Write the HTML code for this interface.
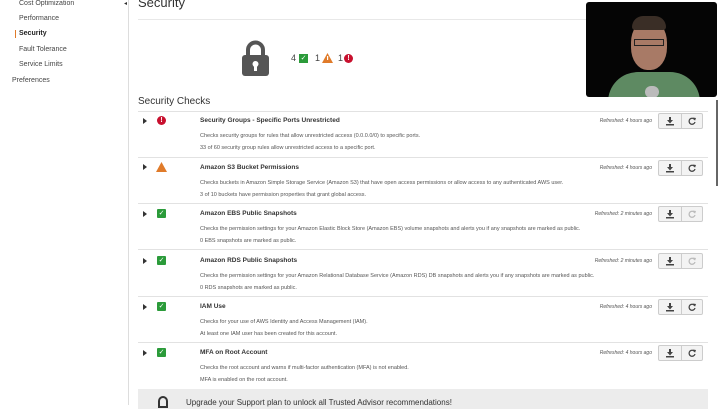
<!DOCTYPE html>
<html><head><style>
*{margin:0;padding:0;box-sizing:border-box}
body{width:720px;height:405px;overflow:hidden;background:#fff;font-family:"Liberation Sans",sans-serif;color:#333;position:relative}
.a{position:absolute}
.nav{font-size:7px;color:#444}
.row .t{position:absolute;left:200px;font-size:6.5px;font-weight:bold;color:#333}
.d{position:absolute;left:200px;font-size:5.5px;color:#555;white-space:nowrap}
.sep{position:absolute;left:138px;width:570px;height:1px;background:#e2e2e2}
.ref{position:absolute;right:68px;font-size:5px;font-style:italic;color:#555}
.btn{position:absolute;left:658px;width:45px;height:16px;border:1px solid #ccc;border-radius:2px;background:#f3f3f3}
.btn:after{content:"";position:absolute;left:22px;top:0;width:1px;height:14px;background:#ccc}
.btn svg{position:absolute;top:3px}
.ok{position:absolute;left:157px;width:9px;height:9px;background:#2b9b3a;border-radius:1px;color:#fff;font-size:7px;line-height:9px;text-align:center}
.tri{position:absolute;left:143px;width:0;height:0;border-left:4px solid #333;border-top:3px solid transparent;border-bottom:3px solid transparent}
</style></head><body>
<svg width="0" height="0" style="position:absolute"><defs>
<g id="dl"><path d="M3 0h2v3h2L4 6.5 1 3h2z" fill="#444"/><rect x="0" y="7" width="8" height="1.5" fill="#444"/></g>
<g id="rf"><path d="M6.6 2.6A3 3 0 1 0 7 5" fill="none" stroke="currentColor" stroke-width="1.3"/><path d="M5 0.5l3 .5-1 2.7z" fill="currentColor"/></g>
</defs></svg>
<div class="a" style="left:128px;top:0;width:1px;height:405px;background:#ddd"></div>
<div class="a" style="left:124px;top:0;font-size:6px">◂</div>
<div class="a nav" style="left:19px;top:0">Cost Optimization</div>
<div class="a nav" style="left:19px;top:15px">Performance</div>
<div class="a" style="left:15px;top:30px;width:1px;height:8px;background:#e07b2a"></div>
<div class="a nav" style="left:19px;top:30px;font-weight:bold;color:#222">Security</div>
<div class="a nav" style="left:19px;top:46px">Fault Tolerance</div>
<div class="a nav" style="left:19px;top:61px">Service Limits</div>
<div class="a nav" style="left:12px;top:77px">Preferences</div>
<div class="a" style="left:138px;top:-5px;font-size:13px;color:#333">Security</div>
<div class="a" style="left:138px;top:19px;width:450px;height:1px;background:#e8e8e8"></div>
<svg class="a" style="left:241px;top:40px" width="29" height="37"><path d="M7 16V10a7.5 7.5 0 0 1 15 0v6" fill="none" stroke="#555" stroke-width="4"/><rect x="1" y="15" width="27" height="21" rx="3" fill="#555"/><circle cx="14.5" cy="24" r="3" fill="#fff"/><rect x="13" y="25" width="3" height="6" fill="#fff"/></svg>
<div class="a" style="left:291px;top:53px;font-size:9px;color:#444">4</div>
<div class="a" style="left:299px;top:54px;width:9px;height:9px;background:#2b9b3a;color:#fff;font-size:7px;line-height:9px;text-align:center">✓</div>
<div class="a" style="left:315px;top:53px;font-size:9px;color:#444">1</div>
<svg class="a" style="left:322px;top:53px" width="11" height="10"><path d="M5.5 0L11 10H0z" fill="#e07b2a"/><rect x="5" y="3" width="1.2" height="4" fill="#fff"/></svg>
<div class="a" style="left:338px;top:53px;font-size:9px;color:#444">1</div>
<div class="a" style="left:344px;top:54px;width:9px;height:9px;border-radius:50%;background:#c8102e;color:#fff;font-size:7px;font-weight:bold;line-height:9px;text-align:center">!</div>
<div class="a" style="left:138px;top:96px;font-size:10px;color:#333">Security Checks</div>
<div class="sep" style="top:111px"></div>

<div class="row">
<div class="tri" style="top:118px"></div>
<div class="a" style="left:157px;top:116px;width:9px;height:9px;border-radius:50%;background:#c8102e;color:#fff;font-size:7px;font-weight:bold;line-height:9px;text-align:center">!</div>
<div class="t" style="top:117px">Security Groups - Specific Ports Unrestricted</div>
<div class="d" style="top:133px">Checks security groups for rules that allow unrestricted access (0.0.0.0/0) to specific ports.</div>
<div class="d" style="top:145px">33 of 60 security group rules allow unrestricted access to a specific port.</div>
<div class="ref" style="top:118px">Refreshed: 4 hours ago</div><div class="btn" style="top:113px"><svg style="left:7px" width="8" height="9"><use href="#dl"/></svg><svg style="left:29px;color:#444" width="9" height="9"><use href="#rf"/></svg></div>
</div>
<div class="sep" style="top:157px"></div>

<div class="row">
<div class="tri" style="top:164px"></div>
<svg class="a" style="left:156px;top:162px" width="11" height="10"><path d="M5.5 0L11 10H0z" fill="#e07b2a"/></svg>
<div class="t" style="top:164px">Amazon S3 Bucket Permissions</div>
<div class="d" style="top:180px">Checks buckets in Amazon Simple Storage Service (Amazon S3) that have open access permissions or allow access to any authenticated AWS user.</div>
<div class="d" style="top:192px">3 of 10 buckets have permission properties that grant global access.</div>
<div class="ref" style="top:165px">Refreshed: 4 hours ago</div><div class="btn" style="top:160px"><svg style="left:7px" width="8" height="9"><use href="#dl"/></svg><svg style="left:29px;color:#444" width="9" height="9"><use href="#rf"/></svg></div>
</div>
<div class="sep" style="top:203px"></div>

<div class="row">
<div class="tri" style="top:211px"></div><div class="ok" style="top:209px">✓</div>
<div class="t" style="top:210px">Amazon EBS Public Snapshots</div>
<div class="d" style="top:226px">Checks the permission settings for your Amazon Elastic Block Store (Amazon EBS) volume snapshots and alerts you if any snapshots are marked as public.</div>
<div class="d" style="top:238px">0 EBS snapshots are marked as public.</div>
<div class="ref" style="top:211px">Refreshed: 2 minutes ago</div><div class="btn" style="top:206px"><svg style="left:7px" width="8" height="9"><use href="#dl"/></svg><svg style="left:29px;color:#bbb" width="9" height="9"><use href="#rf"/></svg></div>
</div>
<div class="sep" style="top:249px"></div>

<div class="row">
<div class="tri" style="top:258px"></div><div class="ok" style="top:256px">✓</div>
<div class="t" style="top:257px">Amazon RDS Public Snapshots</div>
<div class="d" style="top:273px">Checks the permission settings for your Amazon Relational Database Service (Amazon RDS) DB snapshots and alerts you if any snapshots are marked as public.</div>
<div class="d" style="top:285px">0 RDS snapshots are marked as public.</div>
<div class="ref" style="top:258px">Refreshed: 2 minutes ago</div><div class="btn" style="top:253px"><svg style="left:7px" width="8" height="9"><use href="#dl"/></svg><svg style="left:29px;color:#bbb" width="9" height="9"><use href="#rf"/></svg></div>
</div>
<div class="sep" style="top:296px"></div>

<div class="row">
<div class="tri" style="top:304px"></div><div class="ok" style="top:302px">✓</div>
<div class="t" style="top:303px">IAM Use</div>
<div class="d" style="top:319px">Checks for your use of AWS Identity and Access Management (IAM).</div>
<div class="d" style="top:331px">At least one IAM user has been created for this account.</div>
<div class="ref" style="top:304px">Refreshed: 4 hours ago</div><div class="btn" style="top:299px"><svg style="left:7px" width="8" height="9"><use href="#dl"/></svg><svg style="left:29px;color:#444" width="9" height="9"><use href="#rf"/></svg></div>
</div>
<div class="sep" style="top:342px"></div>

<div class="row">
<div class="tri" style="top:350px"></div><div class="ok" style="top:348px">✓</div>
<div class="t" style="top:349px">MFA on Root Account</div>
<div class="d" style="top:365px">Checks the root account and warns if multi-factor authentication (MFA) is not enabled.</div>
<div class="d" style="top:377px">MFA is enabled on the root account.</div>
<div class="ref" style="top:350px">Refreshed: 4 hours ago</div><div class="btn" style="top:345px"><svg style="left:7px" width="8" height="9"><use href="#dl"/></svg><svg style="left:29px;color:#444" width="9" height="9"><use href="#rf"/></svg></div>
</div>

<div class="a" style="left:138px;top:389px;width:570px;height:20px;background:#ececec"></div>
<div class="a" style="left:158px;top:396px;width:10px;height:12px;border:2px solid #333;border-radius:5px 5px 0 0"></div>
<div class="a" style="left:186px;top:398px;font-size:8px;color:#333">Upgrade your Support plan to unlock all Trusted Advisor recommendations!</div>
<div class="a" style="left:716px;top:100px;width:2px;height:86px;background:#666"></div>

<div class="a" style="left:586px;top:2px;width:131px;height:95px;background:#050505;border-radius:3px;overflow:hidden">
<div class="a" style="left:22px;top:70px;width:92px;height:40px;background:#5e8a62;border-radius:30px 30px 0 0"></div>
<div class="a" style="left:45px;top:18px;width:36px;height:50px;background:#a87a66;border-radius:45%"></div>
<div class="a" style="left:46px;top:14px;width:34px;height:14px;background:#3a2e26;border-radius:15px 15px 4px 4px"></div>
<div class="a" style="left:48px;top:37px;width:30px;height:7px;border:1px solid #222"></div>
<div class="a" style="left:59px;top:84px;width:14px;height:12px;background:#bbb;border-radius:6px"></div>
</div>
</body></html>
